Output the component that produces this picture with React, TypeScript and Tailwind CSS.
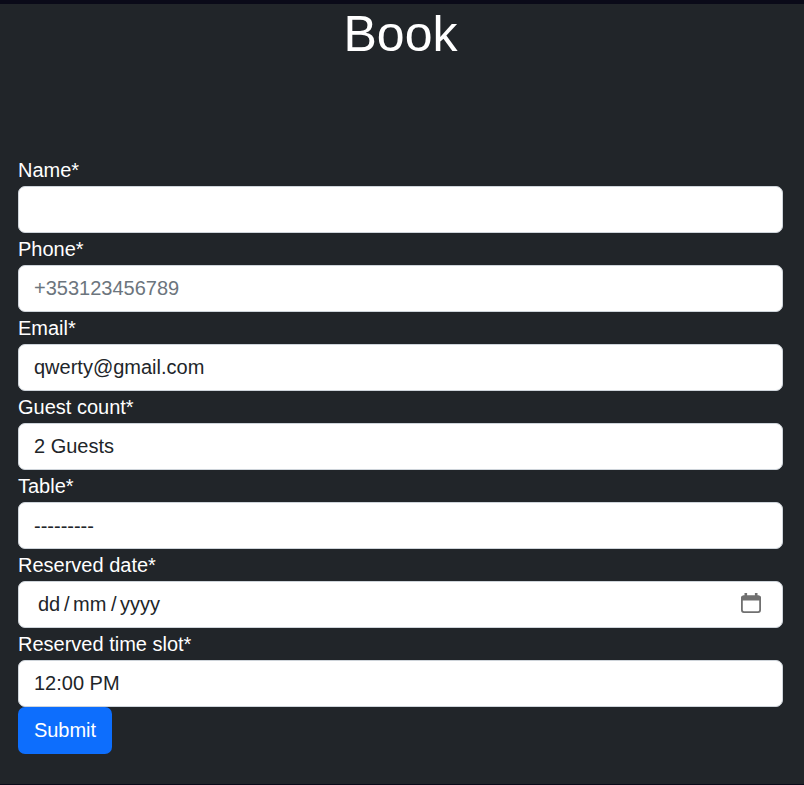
import type { ReactNode } from "react";

const control =
  "block h-[47px] w-full rounded-[7px] border border-[#ced4da] bg-white px-[15px] text-[20px] leading-[30px] text-[#212529] placeholder:text-[#6c757d] placeholder:opacity-100 appearance-none outline-none";

function Field({ id, label, children }: { id: string; label: string; children: ReactNode }) {
  return (
    <div>
      <label htmlFor={id} className="block h-8 text-[20px] leading-8">
        {label}
      </label>
      {children}
    </div>
  );
}

function CalendarIcon() {
  return (
    <svg className="mb-[2px] h-5 w-5" viewBox="0 0 20 20" fill="none">
      <path d="M3.500 0h2.600v3H3.500zM13.900 0h2.600v3h-2.600z" fill="#707070" />
      <path d="M2.500 2.500h15A2.500 2.500 0 0 1 20 5V7.400H0V5A2.500 2.500 0 0 1 2.500 2.500z" fill="#707070" />
      <rect x="0.900" y="3.400" width="18.200" height="15.700" rx="2" stroke="#707070" strokeWidth="1.800" />
    </svg>
  );
}

export default function App() {
  return (
    <main className="h-[785px] w-full overflow-hidden border-t-4 border-b border-[#0a0a18] bg-[#212529] font-['Liberation_Sans',Arial,sans-serif] text-white">
      <h1 className="h-[150px] pr-[3px] text-center text-[50px] leading-[60px] font-normal">Book</h1>
      <form className="pr-[21px] pl-[18px]" onSubmit={(e) => e.preventDefault()}>
        <Field id="name" label="Name*">
          <input id="name" className={control} />
        </Field>
        <Field id="phone" label="Phone*">
          <input id="phone" className={control} placeholder="+353123456789" />
        </Field>
        <Field id="email" label="Email*">
          <input id="email" className={control} defaultValue="qwerty@gmail.com" />
        </Field>
        <Field id="guests" label="Guest count*">
          <select id="guests" className={`${control} pb-[2px]`}>
            <option>2 Guests</option>
          </select>
        </Field>
        <Field id="table" label="Table*">
          <select id="table" className={control}>
            <option>---------</option>
          </select>
        </Field>
        <Field id="date" label="Reserved date*">
          <div id="date" className={`${control} !flex items-center justify-between !pr-[21px] pb-[2px] !pl-[19px]`}>
            <div className="flex">
              <span className="w-[26px]">dd</span>
              <span className="w-[9px]">/</span>
              <span className="w-[38px]">mm</span>
              <span className="w-[9px]">/</span>
              <span>yyyy</span>
            </div>
            <CalendarIcon />
          </div>
        </Field>
        <Field id="time" label="Reserved time slot*">
          <select id="time" className={`${control} pb-[2px]`}>
            <option>12:00 PM</option>
          </select>
        </Field>
        <button className="block h-[47px] w-[94px] rounded-[7px] bg-[#0d6efd] pb-[2px] text-[20px] leading-[30px]">
          Submit
        </button>
      </form>
    </main>
  );
}
